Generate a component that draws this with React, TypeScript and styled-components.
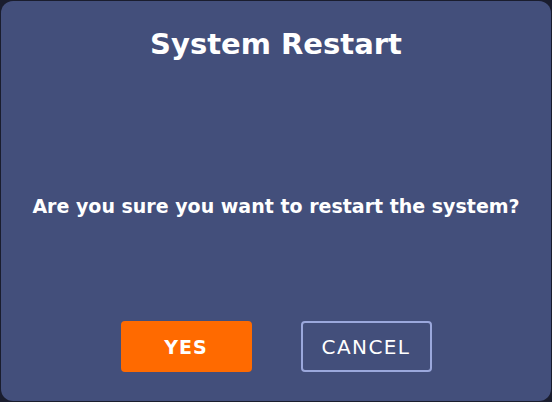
import React from 'react';
import styled, { createGlobalStyle } from 'styled-components';

const GlobalStyle = createGlobalStyle`
    html, body {
        margin: 0;
        padding: 0;
        background: #1a1d2e;
    }
    body {
        font-family: 'DejaVu Sans', 'Liberation Sans', sans-serif;
    }
`;

const Screen = styled.div`
    width: 552px;
    height: 402px;
    padding: 1px;
    box-sizing: border-box;
`;

const Dialog = styled.section`
    height: 100%;
    box-sizing: border-box;
    background-color: #434f7b;
    border-radius: 12px;
    display: flex;
    flex-direction: column;
    align-items: center;
    padding: 22px 0 29px;
    color: #ffffff;
`;

const Title = styled.h1`
    margin: 0;
    font-size: 29px;
    font-weight: 700;
    line-height: 42px;
`;

const Message = styled.p`
    margin: 0;
    flex: 1;
    display: flex;
    align-items: center;
    font-size: 19px;
    font-weight: 700;
    padding-top: 25px;
`;

const Actions = styled.div`
    display: flex;
    gap: 49px;
`;

const ActionButton = styled.button<{ $primary?: boolean }>`
    width: 131px;
    height: 51px;
    box-sizing: border-box;
    border-radius: 4px;
    font-family: inherit;
    font-size: ${p => p.$primary ? '19px' : '20px'};
    letter-spacing: ${p => p.$primary ? '1px' : '1.4px'};
    cursor: pointer;
    color: #ffffff;
    background-color: ${p => p.$primary ? '#ff6a00' : 'transparent'};
    border: 2px solid ${p => p.$primary ? '#ff6a00' : '#9ba8dc'};
    font-weight: ${p => p.$primary ? 700 : 400};
`;

export default function App() {
    return (
        <Screen>
            <GlobalStyle />
            <Dialog>
                <Title>System Restart</Title>
                <Message>Are you sure you want to restart the system?</Message>
                <Actions>
                    <ActionButton $primary>YES</ActionButton>
                    <ActionButton>CANCEL</ActionButton>
                </Actions>
            </Dialog>
        </Screen>
    );
}
